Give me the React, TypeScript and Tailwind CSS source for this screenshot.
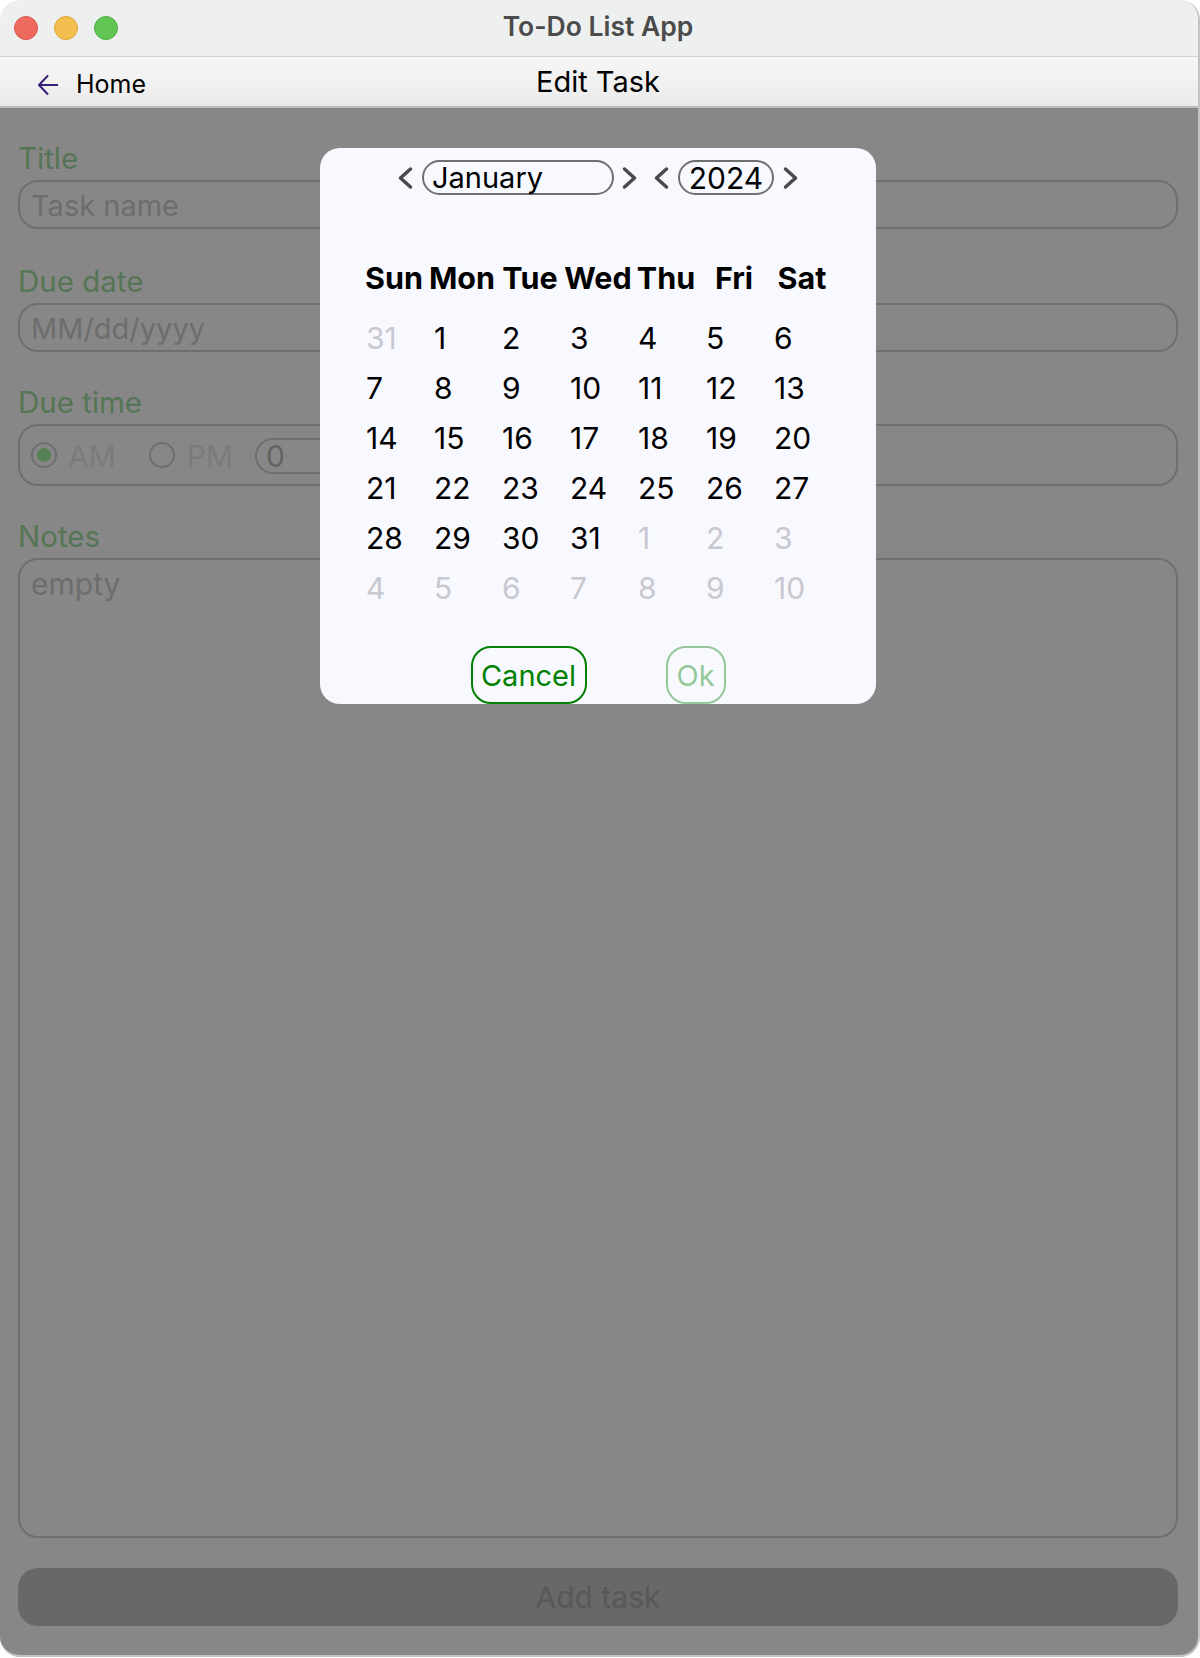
import type { ReactNode } from "react";

const leading = [31];
const current = Array.from({ length: 31 }, (_, i) => i + 1);
const trailing = [1, 2, 3, 4, 5, 6, 7, 8, 9, 10];
const weekdays = ["Sun", "Mon", "Tue", "Wed", "Thu", "Fri", "Sat"];

function Chevron({ dir }: { dir: "left" | "right" }) {
  return (
    <svg width="16" height="24" viewBox="0 0 16 24" fill="none" className="shrink-0">
      <path
        d={dir === "left" ? "M13.5 3 L3.5 12 L13.5 21" : "M2.5 3 L12.5 12 L2.5 21"}
        stroke="#4a4a4a"
        strokeWidth="3.5"
        strokeLinecap="round"
        strokeLinejoin="round"
      />
    </svg>
  );
}

function Field({ label, children, className }: { label: string; children: ReactNode; className?: string }) {
  return (
    <div className={`flex flex-col ${className ?? ""}`}>
      <div className="h-[34px] mb-[6px] text-[29.5px] leading-[36px] text-[#557555]">{label}</div>
      {children}
    </div>
  );
}

function TextBox({ placeholder }: { placeholder: string }) {
  return (
    <div className="h-[49px] rounded-[20px] border-2 border-[#6f6f6f] px-[11px] pt-[2px] flex items-center text-[29px] text-[#6d6d6d]">
      {placeholder}
    </div>
  );
}

function Radio({ on }: { on?: boolean }) {
  return (
    <span className="w-[26px] h-[26px] rounded-full border-2 border-[#6f6f6f] flex items-center justify-center shrink-0">
      {on && <span className="w-[14px] h-[14px] rounded-full bg-[#568056]" />}
    </span>
  );
}

function DatePicker() {
  return (
    <div className="absolute left-[320px] top-[40px] w-[556px] h-[556px] rounded-[20px] bg-[#f8f9ff] overflow-hidden flex flex-col items-center pt-[12px]">
      <div className="flex items-center h-[35px] text-[29px] text-black">
        <Chevron dir="left" />
        <div className="ml-[9px] w-[192px] h-[35px] rounded-full border-2 border-[#6f6f6f] pl-[8px] leading-[32px]">
          January
        </div>
        <span className="w-[8px]" />
        <Chevron dir="right" />
        <span className="w-[15px]" />
        <Chevron dir="left" />
        <div className="ml-[9px] w-[96px] h-[35px] rounded-full border-2 border-[#6f6f6f] text-center text-[30px] leading-[32px]">
          2024
        </div>
        <span className="w-[9px]" />
        <Chevron dir="right" />
      </div>

      <div className="mt-[66px] w-[476px] grid grid-cols-7 text-center text-[30.5px] leading-[34px] font-bold text-black">
        {weekdays.map((d) => (
          <div key={d} className="whitespace-nowrap">{d}</div>
        ))}
      </div>

      <div className="mt-[18px] w-[476px] grid grid-cols-7 text-[30px] leading-[50px]">
        {leading.map((d) => (
          <div key={`p${d}`} className="pl-[6px] text-[#c8c8d0]">{d}</div>
        ))}
        {current.map((d) => (
          <div key={d} className="pl-[6px] text-black">{d}</div>
        ))}
        {trailing.map((d) => (
          <div key={`n${d}`} className="pl-[6px] text-[#c8c8d0]">{d}</div>
        ))}
      </div>

      <div className="mt-[33px] flex gap-[79px] text-[29px] text-[#008000]">
        <div className="w-[116px] h-[58px] pt-[2px] rounded-[20px] border-2 border-[#008000] flex items-center justify-center">
          Cancel
        </div>
        <div className="w-[60px] h-[58px] pt-[2px] rounded-[20px] border-2 border-[#008000] opacity-40 flex items-center justify-center">
          Ok
        </div>
      </div>
    </div>
  );
}

export default function App() {
  return (
    <div className="w-[1200px] h-[1658px] bg-white font-[Inter,sans-serif]">
      <div className="w-[1200px] h-[1657px] rounded-[20px] border-r-2 border-b-2 border-[#c4c4c4] overflow-hidden flex flex-col">
        {/* title bar */}
        <div className="relative h-[57px] shrink-0 bg-[#eef0ef] border-b border-[#d2d2d2] pr-[2px] pb-[2px] flex items-center justify-center">
          <div className="absolute left-[14px] top-[16px] flex gap-[16px]">
            <span className="w-[24px] h-[24px] rounded-full bg-[#ee6a5f] border border-[#d9574e]" />
            <span className="w-[24px] h-[24px] rounded-full bg-[#f5bf4f] border border-[#dea63c]" />
            <span className="w-[24px] h-[24px] rounded-full bg-[#61c554] border border-[#4fae44]" />
          </div>
          <span className="text-[26.5px] font-semibold text-[#4b4b4b]">To-Do List App</span>
        </div>

        {/* nav bar */}
        <div className="h-[51px] shrink-0 bg-gradient-to-b from-[#f6f6f6] to-[#ebebeb] border-b-2 border-[#bdbdbd] pr-[2px] grid grid-cols-[1fr_auto_1fr] items-center text-black">
          <div className="flex items-center pl-[38px] gap-[18px] pt-[6px]">
            <svg width="20" height="22" viewBox="0 0 20 22" fill="none">
              <path d="M20 11 H1 M10 1.5 L1 11 L10 20.5" stroke="#3a1f78" strokeWidth="2" strokeLinejoin="round" />
            </svg>
            <span className="text-[25px]">Home</span>
          </div>
          <div className="text-[29px] pt-[1px]">Edit Task</div>
          <div />
        </div>

        {/* dimmed form */}
        <div className="relative flex-1 min-h-0 bg-[#878787] pl-[18px] pr-[20px] pt-[32px] pb-[29px] flex flex-col">
          <Field label="Title" className="mb-[34px]">
            <TextBox placeholder="Task name" />
          </Field>
          <Field label="Due date" className="mb-[32px]">
            <TextBox placeholder="MM/dd/yyyy" />
          </Field>
          <Field label="Due time" className="mb-[32px]">
            <div className="h-[62px] rounded-[20px] border-2 border-[#6f6f6f] pl-[11px] flex items-center text-[30px]">
              <Radio on />
              <span className="ml-[11px] pt-[2px] text-[#7b7b7b]">AM</span>
              <span className="ml-[33px]">
                <Radio />
              </span>
              <span className="ml-[12px] pt-[2px] text-[#7b7b7b]">PM</span>
              <div className="ml-[22px] mt-[1px] w-[200px] h-[36px] rounded-full border-2 border-[#6f6f6f] pl-[9px] leading-[32px] text-[#636363]">
                0
              </div>
            </div>
          </Field>
          <Field label="Notes" className="flex-1 min-h-0">
            <div className="flex-1 rounded-[20px] border-2 border-[#6f6f6f] px-[11px] pt-[2px] text-[30px] text-[#6d6d6d]">
              empty
            </div>
          </Field>
          <div className="mt-[30px] h-[58px] shrink-0 rounded-[20px] bg-[#686868] flex items-center justify-center text-[30px] text-[#585858]">
            Add task
          </div>

          <DatePicker />
        </div>
      </div>
    </div>
  );
}
